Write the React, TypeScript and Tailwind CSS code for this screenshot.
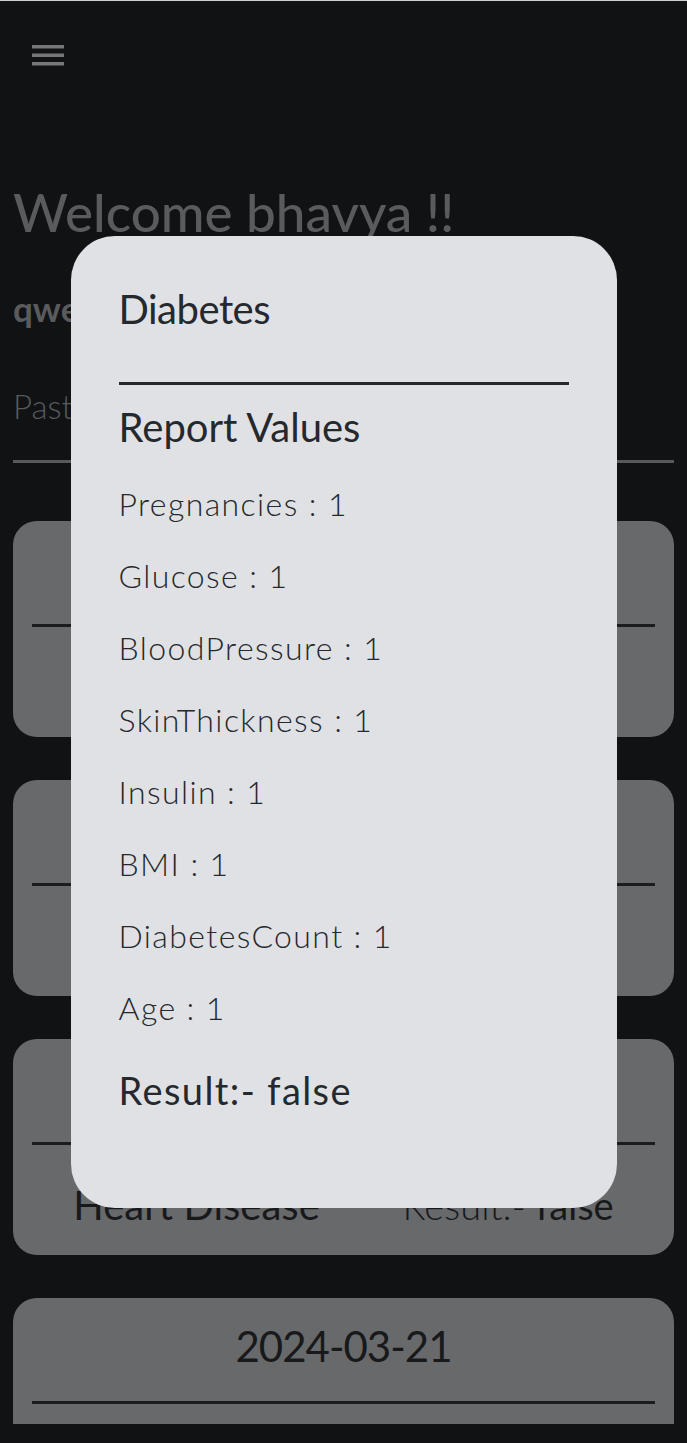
const font = { fontFamily: 'Lato, "Noto Sans", sans-serif' }

type Report = {
  date: string
  disease: string
}

const reports: Report[] = [
  { date: '2024-03-21', disease: 'Diabetes' },
  { date: '2024-03-21', disease: 'Heart Disease' },
  { date: '2024-03-21', disease: 'Heart Disease' },
  { date: '2024-03-21', disease: 'Diabetes' },
]

const values = [
  ['Pregnancies', '1'],
  ['Glucose', '1'],
  ['BloodPressure', '1'],
  ['SkinThickness', '1'],
  ['Insulin', '1'],
  ['BMI', '1'],
  ['DiabetesCount', '1'],
  ['Age', '1'],
]

function ReportCard({ r }: { r: Report }) {
  return (
    <div className="h-[216px] shrink-0 rounded-[24px] bg-[#68696b] px-[19px] text-[#18191b]">
      <div className="h-[103px] pt-[27px] text-center text-[42px] leading-none tracking-[-1px]">
        {r.date}
      </div>
      <div className="h-[3px] bg-[#1b1c1e]" />
      <div className="mt-[40px] flex items-baseline justify-around leading-none">
        <span className="text-[40px]">{r.disease}</span>
        <span className="text-[38px]">
          <span className="font-light">Result:- </span>false
        </span>
      </div>
    </div>
  )
}

export default function App() {
  return (
    <div style={font} className="relative h-[1443px] overflow-hidden border-t border-[#cfd0d2] bg-[#111214]">
      <div className="h-[1423px] overflow-hidden px-[13px]">
        <button className="ml-[19px] mt-[44px] block">
          <svg width="32" height="21" viewBox="0 0 32 21" fill="#76777a">
            <rect x="0" y="0" width="32" height="3.5" />
            <rect x="0" y="8.5" width="32" height="3.5" />
            <rect x="0" y="17" width="32" height="3.5" />
          </svg>
        </button>
        <h1 className="mt-[119px] text-[53px] font-medium leading-none text-[#5a5b5d]">Welcome bhavya !!</h1>
        <div className="mt-[53px] text-[35px] font-bold leading-none text-[#5a5b5d]">qwerty</div>
        <div className="mt-[64px] text-[33px] font-light leading-none text-[#58595b]">Past Reports</div>
        <div className="mt-[37px] h-[3px] bg-[#58595b]" />
        <div className="mt-[58px] flex flex-col gap-[43px]">
          {reports.map((r, i) => (
            <ReportCard key={i} r={r} />
          ))}
        </div>
      </div>

      <div className="fixed inset-0 flex items-center justify-center">
        <div className="w-[546px] rounded-[44px] bg-[#dfe1e5] px-[48px] pb-[99px] pt-[53px] text-[#25282c]">
          <div className="text-[40px] leading-none tracking-[-0.5px]">Diabetes</div>
          <div className="mt-[53px] h-[3px] bg-[#25282c]" />
          <div className="mt-[22px] text-[40px] leading-none">Report Values</div>
          <div className="mt-[41px] flex flex-col gap-[40px]">
            {values.map(([k, v]) => (
              <div key={k} className="text-[32px] font-light leading-none tracking-[1.4px]">
                {k} : {v}
              </div>
            ))}
          </div>
          <div className="mt-[47px] text-[38px] leading-none tracking-[1.4px]">Result:- false</div>
        </div>
      </div>
    </div>
  )
}
